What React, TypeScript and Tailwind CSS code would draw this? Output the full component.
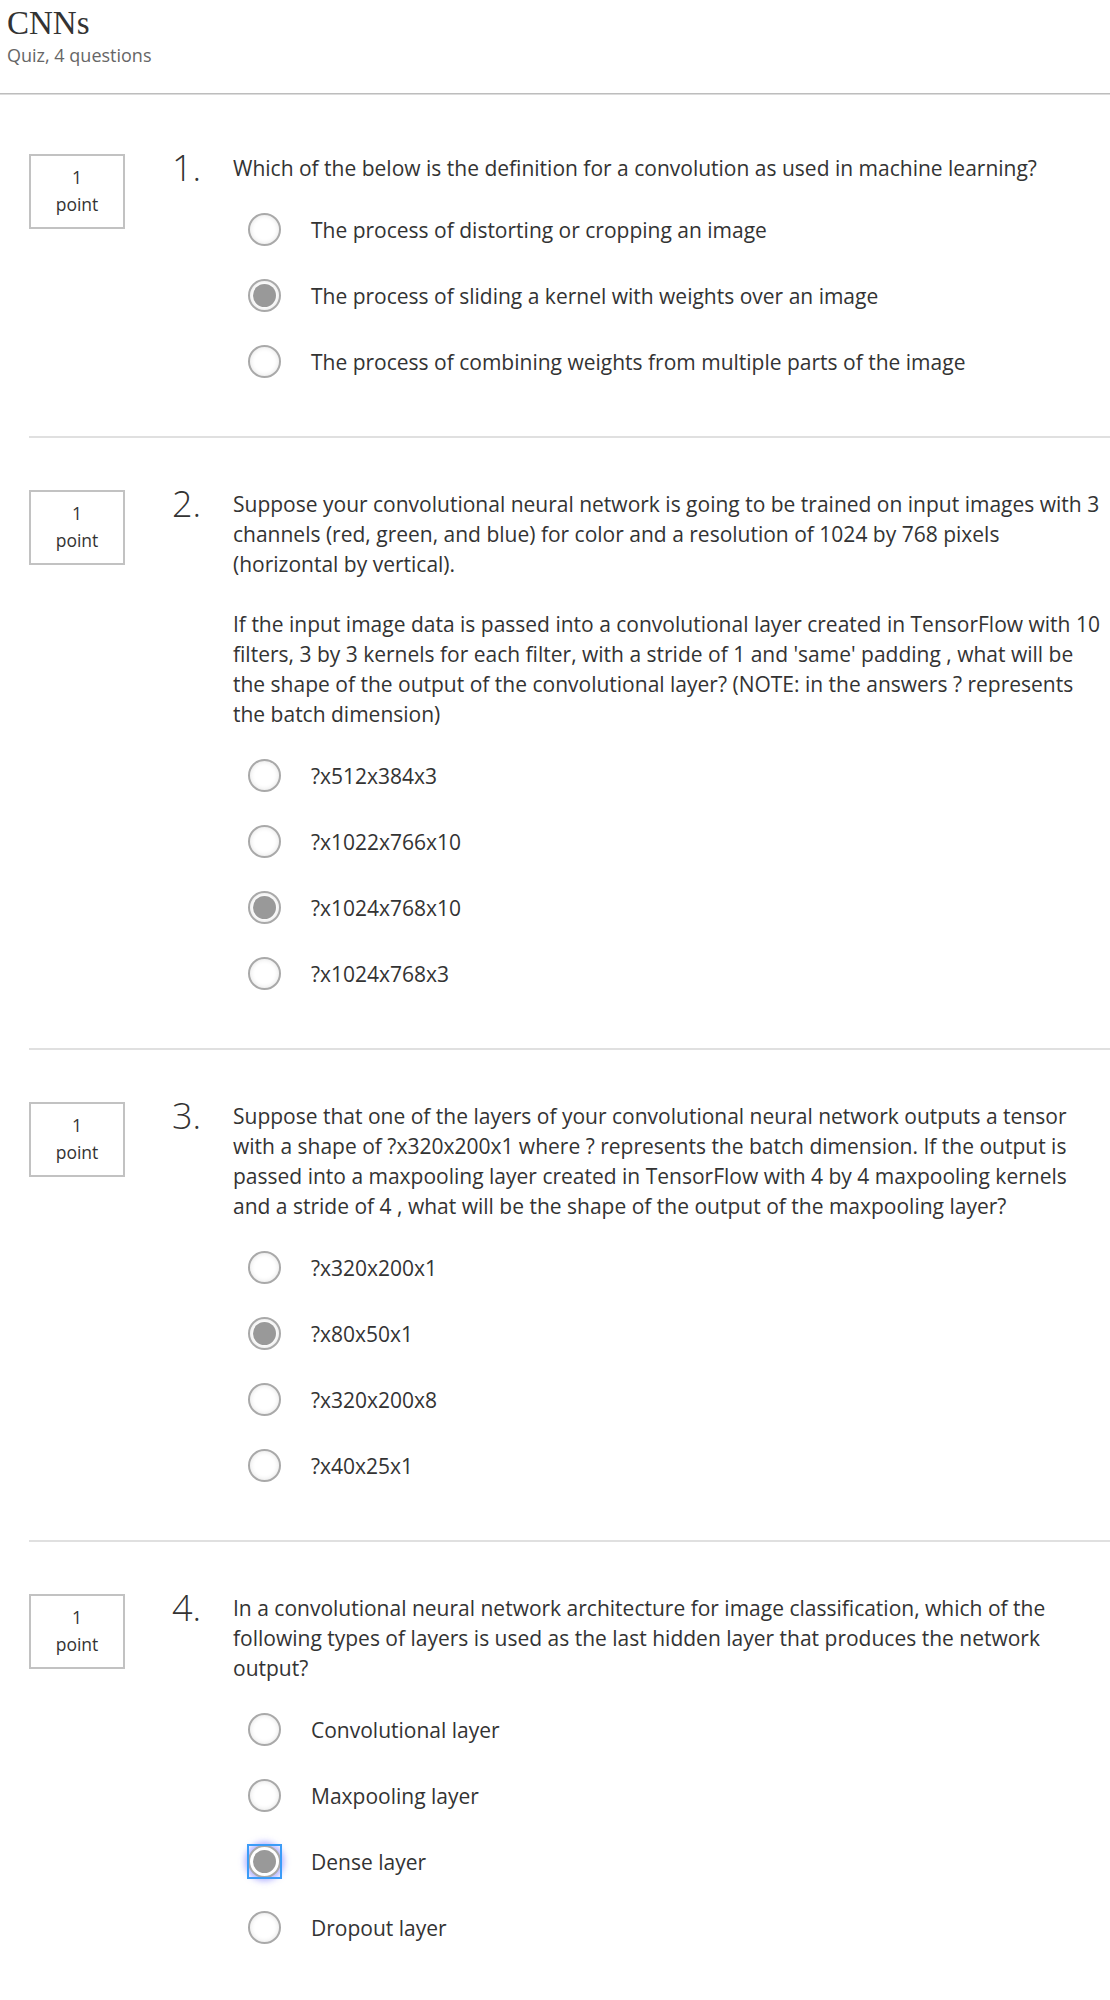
import React from 'react';

interface Question {
  id: number;
  paragraphs: string[];
  options: string[];
  selected: number;
  focused?: boolean;
}

const questions: Question[] = [
  {
    id: 1,
    paragraphs: ['Which of the below is the definition for a convolution as used in machine learning?'],
    options: [
      'The process of distorting or cropping an image',
      'The process of sliding a kernel with weights over an image',
      'The process of combining weights from multiple parts of the image',
    ],
    selected: 1,
  },
  {
    id: 2,
    paragraphs: [
      'Suppose your convolutional neural network is going to be trained on input images with 3 channels (red, green, and blue) for color and a resolution of 1024 by 768 pixels (horizontal by vertical).',
      "If the input image data is passed into a convolutional layer created in TensorFlow with 10 filters, 3 by 3 kernels for each filter, with a stride of 1 and 'same' padding , what will be the shape of the output of the convolutional layer? (NOTE: in the answers ? represents the batch dimension)",
    ],
    options: ['?x512x384x3', '?x1022x766x10', '?x1024x768x10', '?x1024x768x3'],
    selected: 2,
  },
  {
    id: 3,
    paragraphs: [
      'Suppose that one of the layers of your convolutional neural network outputs a tensor with a shape of ?x320x200x1 where ? represents the batch dimension. If the output is passed into a maxpooling layer created in TensorFlow with 4 by 4 maxpooling kernels and a stride of 4 , what will be the shape of the output of the maxpooling layer?',
    ],
    options: ['?x320x200x1', '?x80x50x1', '?x320x200x8', '?x40x25x1'],
    selected: 1,
  },
  {
    id: 4,
    paragraphs: [
      'In a convolutional neural network architecture for image classification, which of the following types of layers is used as the last hidden layer that produces the network output?',
    ],
    options: ['Convolutional layer', 'Maxpooling layer', 'Dense layer', 'Dropout layer'],
    selected: 2,
    focused: true,
  },
];

function Radio({ checked, focused }: { checked: boolean; focused?: boolean }) {
  return (
    <div className="relative w-[33px] h-[33px] shrink-0">
      <div
        className={`w-[33px] h-[33px] rounded-full border-2 border-[#a9a9a9] bg-white flex items-center justify-center ${
          focused
            ? 'shadow-[0_0_6px_3px_rgba(110,110,255,0.55)]'
            : 'shadow-[inset_0_0_5px_rgba(0,0,0,0.12)]'
        }`}
      >
        {checked && <div className="w-[23px] h-[23px] rounded-full bg-[#999999]" />}
      </div>
      {focused && (
        <div className="absolute -left-[1px] -top-[1px] w-[35px] h-[35px] border-2 border-[#3b9cf7]" />
      )}
    </div>
  );
}

function QuestionBlock({ q, last }: { q: Question; last: boolean }) {
  return (
    <div
      className={`flex items-start ${q.id === 1 ? 'pt-[59px]' : 'pt-[52px]'} ${
        last ? 'pb-[60px]' : 'pb-[58px] border-b-2 border-[#e0e0e0]'
      }`}
    >
      <div className="w-[96px] h-[75px] shrink-0 border-2 border-[#c2c2c2] pt-[8px] text-center text-[17.5px] leading-[27px] text-[#333]">
        <div>1</div>
        <div>point</div>
      </div>
      <div className="w-[61px] ml-[47px] shrink-0 -mt-[6px] text-[36px] leading-[40px] font-light text-[#333]">
        {q.id}.
      </div>
      <div className="flex-1 -mt-[1px] pr-[6px]">
        <div className="flex flex-col gap-[30px] text-[21px] leading-[30px] text-[#333]">
          {q.paragraphs.map((p, i) => (
            <p key={i}>{p}</p>
          ))}
        </div>
        <div className="mt-[30px] flex flex-col gap-[33px]">
          {q.options.map((opt, i) => (
            <div key={i} className="flex items-center h-[33px] pl-[15px]">
              <Radio checked={i === q.selected} focused={q.focused && i === q.selected} />
              <span className="ml-[30px] text-[21px] leading-[30px] text-[#333]">{opt}</span>
            </div>
          ))}
        </div>
      </div>
    </div>
  );
}

export default function App() {
  return (
    <div className="w-[1110px] bg-white font-['Open_Sans',sans-serif]">
      <div className="pl-[7px] pt-[4px]">
        <h1 className="font-['Liberation_Serif',serif] text-[33px] leading-[38px] text-[#333]">CNNs</h1>
        <div className="text-[18px] leading-[26px] text-[#666]">Quiz, 4 questions</div>
      </div>
      <div className="mt-[25px] border-t border-b border-t-[#bdbdbd] border-b-[#dcdcdc]" />
      <div className="ml-[29px]">
        {questions.map((q, i) => (
          <QuestionBlock key={q.id} q={q} last={i === questions.length - 1} />
        ))}
      </div>
    </div>
  );
}
